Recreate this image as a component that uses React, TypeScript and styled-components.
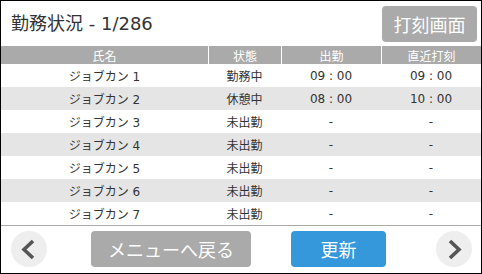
import React from "react";
import styled, { createGlobalStyle } from "styled-components";

const GlobalStyle = createGlobalStyle`
  html, body {
    margin: 0;
    padding: 0;
    background: #fff;
  }
  body {
    font-family: "DejaVu Sans", "Noto Sans CJK JP", sans-serif;
    color: #333;
  }
`;

const Frame = styled.div`
  width: 482px;
  height: 274px;
  box-sizing: border-box;
  border: 1px solid #000;
  display: flex;
  flex-direction: column;
  background: #fff;
`;

const TopBar = styled.div`
  height: 45px;
  display: flex;
  align-items: center;
  justify-content: space-between;
  padding: 0 4px 0 10px;
`;

const Title = styled.h1`
  margin: 0;
  font-size: 18px;
  font-weight: normal;
  color: #333;
  line-height: 1;
`;

const Button = styled.button<{ $tone: "gray" | "blue"; $width: number }>`
  width: ${(p) => p.$width}px;
  height: 36px;
  border: none;
  border-radius: 4px;
  background: ${(p) => (p.$tone === "blue" ? "#3498db" : "#aaaaaa")};
  color: #fff;
  font-family: inherit;
  font-size: 18px;
  padding: 0;
  display: flex;
  align-items: center;
  justify-content: center;
`;

const Grid = styled.div`
  display: grid;
  grid-template-columns: 207px 73px 100px 100px;
`;

const HeadRow = styled(Grid)`
  height: 18px;
  background: #aaaaaa;
`;

const HeadCell = styled.div`
  color: #fff;
  font-size: 12px;
  display: flex;
  align-items: center;
  justify-content: center;
  & + & {
    border-left: 1px solid #fff;
  }
`;

const Row = styled(Grid)<{ $striped: boolean }>`
  height: 23px;
  background: ${(p) => (p.$striped ? "#e5e5e5" : "#fff")};
`;

const Cell = styled.div`
  font-size: 12px;
  color: #333;
  display: flex;
  align-items: center;
  justify-content: center;
`;

const Footer = styled.div`
  flex: 1;
  border-top: 1px solid #aaaaaa;
  display: flex;
  align-items: center;
  padding: 0 9px 1px 10px;
`;

const Circle = styled.button`
  width: 36px;
  height: 36px;
  border: none;
  border-radius: 50%;
  background: #eeeeee;
  padding: 0;
  display: flex;
  align-items: center;
  justify-content: center;
`;

const Spacer = styled.div<{ $w: number }>`
  width: ${(p) => p.$w}px;
  flex-shrink: 0;
`;

const Push = styled.div`
  flex: 1;
`;

const Chevron = ({ dir }: { dir: "left" | "right" }) => (
  <svg width="36" height="36" viewBox="0 0 36 36">
    <polyline
      points={dir === "left" ? "22,10 13,18.5 22,27" : "14,10 23,18.5 14,27"}
      fill="none"
      stroke="#555"
      strokeWidth="3.6"
      strokeLinecap="butt"
      strokeLinejoin="miter"
    />
  </svg>
);

const rows = [
  { name: "ジョブカン 1", status: "勤務中", inAt: "09 : 00", last: "09 : 00" },
  { name: "ジョブカン 2", status: "休憩中", inAt: "08 : 00", last: "10 : 00" },
  { name: "ジョブカン 3", status: "未出勤", inAt: "-", last: "-" },
  { name: "ジョブカン 4", status: "未出勤", inAt: "-", last: "-" },
  { name: "ジョブカン 5", status: "未出勤", inAt: "-", last: "-" },
  { name: "ジョブカン 6", status: "未出勤", inAt: "-", last: "-" },
  { name: "ジョブカン 7", status: "未出勤", inAt: "-", last: "-" },
];

export default function App() {
  return (
    <>
      <GlobalStyle />
      <Frame>
        <TopBar>
          <Title>勤務状況 - 1/286</Title>
          <Button $tone="gray" $width={95}>打刻画面</Button>
        </TopBar>
        <HeadRow>
          <HeadCell>氏名</HeadCell>
          <HeadCell>状態</HeadCell>
          <HeadCell>出勤</HeadCell>
          <HeadCell>直近打刻</HeadCell>
        </HeadRow>
        {rows.map((r, i) => (
          <Row key={r.name} $striped={i % 2 === 1}>
            <Cell>{r.name}</Cell>
            <Cell>{r.status}</Cell>
            <Cell>{r.inAt}</Cell>
            <Cell>{r.last}</Cell>
          </Row>
        ))}
        <Footer>
          <Circle>
            <Chevron dir="left" />
          </Circle>
          <Spacer $w={44} />
          <Button $tone="gray" $width={160}>メニューへ戻る</Button>
          <Spacer $w={40} />
          <Button $tone="blue" $width={95}>更新</Button>
          <Push />
          <Circle>
            <Chevron dir="right" />
          </Circle>
        </Footer>
      </Frame>
    </>
  );
}
